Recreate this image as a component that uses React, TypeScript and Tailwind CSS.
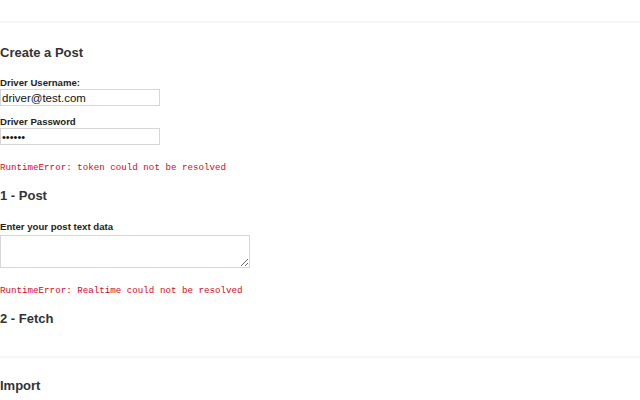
import React from 'react';

const ErrorText = ({ children }: { children: React.ReactNode }) => (
    <p className="font-['Liberation_Mono',monospace] text-[9.2px] leading-[12px] text-[#d8081f]">{children}</p>
);

const Heading = ({ children, className = '' }: { children: React.ReactNode; className?: string }) => (
    <h2 className={`text-[13px] leading-[16px] font-bold text-[#333] ${className}`}>{children}</h2>
);

const Label = ({ children }: { children: React.ReactNode }) => (
    <label className="block text-[9.6px] leading-[12px] font-bold text-[#222]">{children}</label>
);

export default function App() {
    return (
        <div className="w-[640px] h-[400px] overflow-hidden bg-white font-['Liberation_Sans',Arial,sans-serif]">
            <div className="pt-[21px]">
                <hr className="border-0 border-t-2 border-[#f6f6f6]" />
            </div>

            {/* Create a Post */}
            <section>
                <Heading className="mt-[22px]">Create a Post</Heading>

                <div className="mt-[16px]">
                    <Label>Driver Username:</Label>
                    <input
                        type="text"
                        defaultValue="driver@test.com"
                        className="block w-[160px] h-[17px] px-[1px] border border-[#d6d6d6] text-[11.5px] leading-[14px] text-[#111] outline-none"
                    />
                </div>

                <div className="mt-[10px]">
                    <Label>Driver Password</Label>
                    <input
                        type="password"
                        defaultValue="secret"
                        className="block w-[160px] h-[17px] px-[1px] border border-[#d6d6d6] text-[11px] text-[#111] outline-none"
                    />
                </div>

                <div className="mt-[17px]">
                    <ErrorText>RuntimeError: token could not be resolved</ErrorText>
                </div>
            </section>

            {/* 1 - Post */}
            <section>
                <Heading className="mt-[14px]">1 - Post</Heading>
                <div className="mt-[17px]">
                    <Label>Enter your post text data</Label>
                    <textarea className="mt-[2px] block w-[250px] h-[33px] border border-[#d6d6d6] outline-none" />
                </div>
                <div className="mt-[17px]">
                    <ErrorText>RuntimeError: Realtime could not be resolved</ErrorText>
                </div>
            </section>

            {/* 2 - Fetch */}
            <section>
                <Heading className="mt-[14px]">2 - Fetch</Heading>
            </section>

            <hr className="mt-[29px] border-0 border-t-2 border-[#f6f6f6]" />

            {/* Import */}
            <section>
                <Heading className="mt-[20px]">Import</Heading>
            </section>
        </div>
    );
}
